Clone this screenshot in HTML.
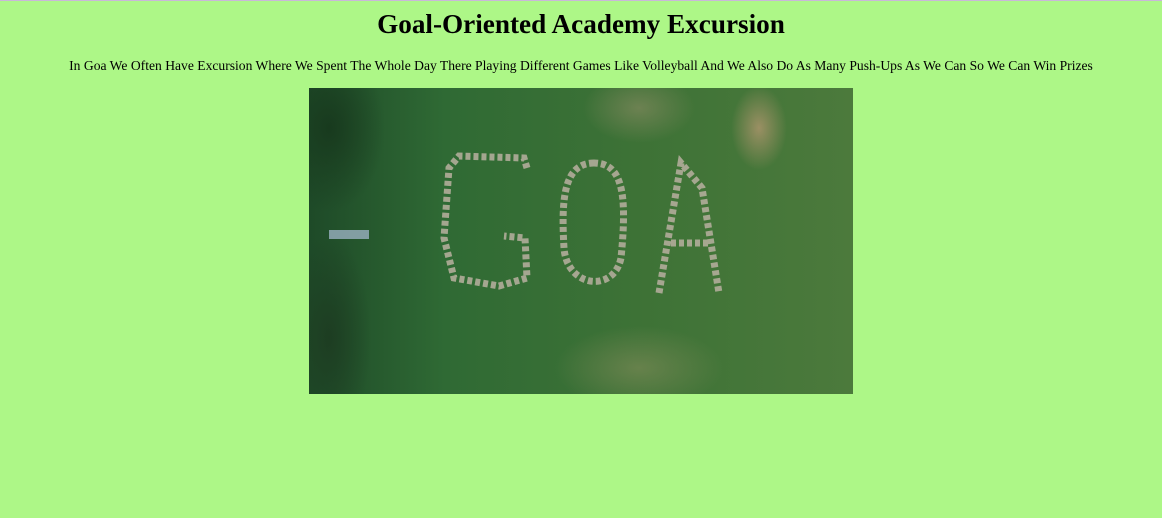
<!DOCTYPE html>
<html><head><style>
html,body{margin:0;padding:0;}
body{width:1162px;height:518px;background:#adf787;border-top:1px solid #c9b8d8;box-sizing:border-box;font-family:"Liberation Serif",serif;color:#000;position:relative;overflow:hidden;}
h1{position:absolute;top:8px;left:0;width:1162px;text-align:center;margin:0;font-size:27.2px;font-weight:bold;line-height:30px;}
p{position:absolute;top:56px;left:0;width:1162px;text-align:center;margin:0;font-size:13.6px;line-height:18px;white-space:nowrap;}
.img{position:absolute;left:309px;top:87px;width:544px;height:306px;overflow:hidden;
background:
radial-gradient(ellipse 40px 60px at 450px 40px,rgba(176,150,110,0.8) 0,transparent 70%),
radial-gradient(ellipse 80px 50px at 330px 20px,rgba(140,140,100,0.6) 0,transparent 70%),
radial-gradient(ellipse 120px 60px at 330px 280px,rgba(130,140,90,0.6) 0,transparent 70%),
radial-gradient(ellipse 80px 120px at 20px 40px,#183a1e 0,transparent 70%),
radial-gradient(ellipse 60px 150px at 20px 250px,#1d3d22 0,transparent 70%),
linear-gradient(90deg,#1e4a28 0,#2f6a34 25%,#3d7236 60%,#4c7a3c 100%);}
.img svg{position:absolute;left:0;top:0;}
</style></head><body>
<h1>Goal-Oriented Academy Excursion</h1>
<p>In Goa We Often Have Excursion Where We Spent The Whole Day There Playing Different Games Like Volleyball And We Also Do As Many Push-Ups As We Can So We Can Win Prizes</p>
<div class="img">
<svg width="544" height="306" viewBox="0 0 544 306">
<g fill="none" stroke="#b8b0a0" stroke-width="7" stroke-dasharray="5 3" opacity="0.85">
<path d="M218 80 L215 70 L150 68 L140 80 L135 150 L145 190 L190 198 L218 190 L216 150 L195 148"/>
<path d="M285 75 C255 75 252 110 255 160 C258 200 305 205 312 170 C318 110 315 75 285 75 Z"/>
<path d="M350 205 L372 75 L393 100 L410 205 M362 155 L400 155"/>
</g>
<rect x="20" y="142" width="40" height="9" fill="#9ab0c0" opacity="0.8"/>
</svg>
</div>
</body></html>
